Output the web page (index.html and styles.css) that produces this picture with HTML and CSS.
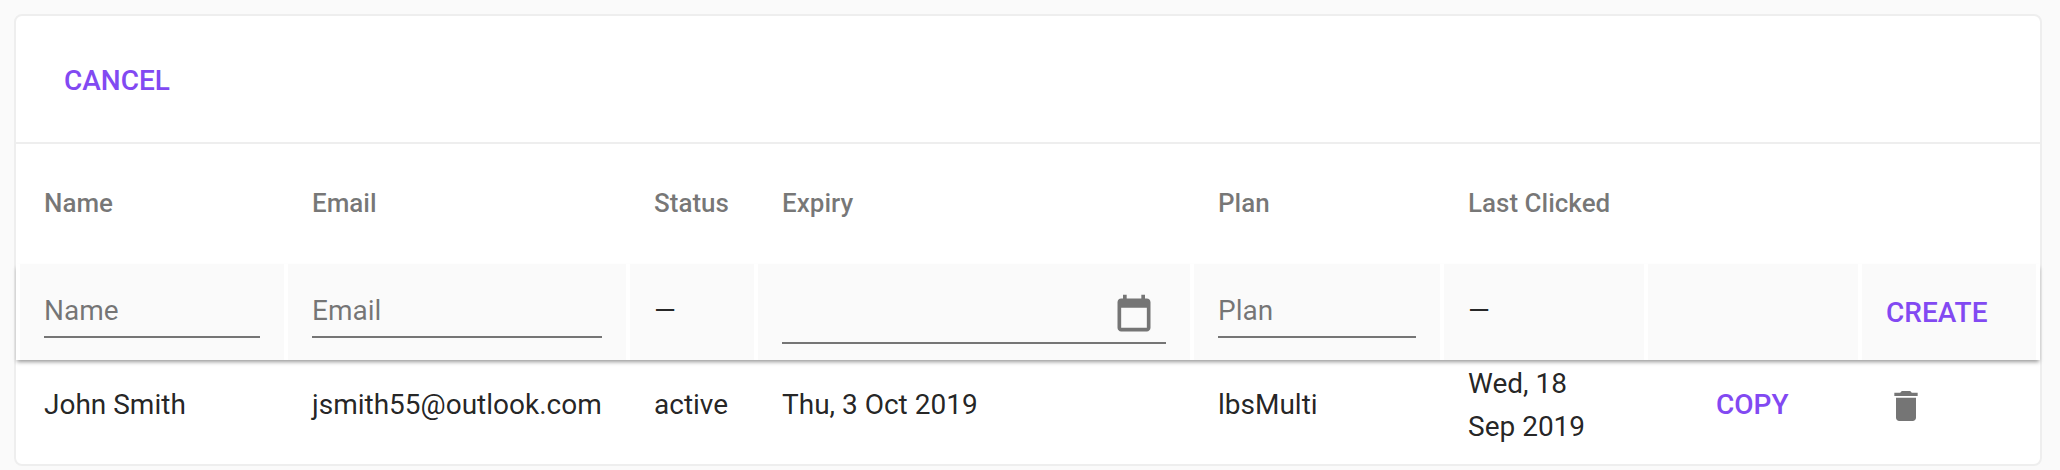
FILE: index.html
```html
<!DOCTYPE html>
<html lang="en">
<head>
  <meta charset="UTF-8">
  <title>Links</title>
  <link rel="stylesheet" href="styles.css">
</head>
<body>

  <div class="card">
    <div class="toolbar">
      <button class="text-btn">CANCEL</button>
    </div>

    <div class="row head-row">
      <div class="cell">Name</div>
      <div class="cell">Email</div>
      <div class="cell">Status</div>
      <div class="cell">Expiry</div>
      <div class="cell">Plan</div>
      <div class="cell">Last Clicked</div>
      <div class="cell"></div>
      <div class="cell"></div>
    </div>

    <div class="row filter-row">
      <div class="cell"><input class="field" type="text" placeholder="Name"></div>
      <div class="cell"><input class="field" type="text" placeholder="Email"></div>
      <div class="cell dash">&mdash;</div>
      <div class="cell">
        <div class="date-field">
          <svg class="calendar" viewBox="0 0 24 24"><path d="M19 3h-1V1h-2v2H8V1H6v2H5c-1.11 0-1.99.9-1.99 2L3 19c0 1.1.89 2 2 2h14c1.1 0 2-.9 2-2V5c0-1.1-.9-2-2-2zm0 16H5V8h14v11z"/></svg>
        </div>
      </div>
      <div class="cell"><input class="field" type="text" placeholder="Plan"></div>
      <div class="cell dash">&mdash;</div>
      <div class="cell"></div>
      <div class="cell"><button class="text-btn">CREATE</button></div>
    </div>

    <div class="row body-row">
      <div class="cell">John Smith</div>
      <div class="cell">jsmith55@outlook.com</div>
      <div class="cell">active</div>
      <div class="cell">Thu, 3 Oct 2019</div>
      <div class="cell">lbsMulti</div>
      <div class="cell date-cell">Wed, 18 Sep 2019</div>
      <div class="cell copy-cell"><button class="text-btn">COPY</button></div>
      <div class="cell">
        <svg class="trash" viewBox="0 0 24 24"><path d="M6 19c0 1.1.9 2 2 2h8c1.1 0 2-.9 2-2V7H6v12zM19 4h-3.5l-1-1h-5l-1 1H5v2h14V4z"/></svg>
      </div>
    </div>
  </div>

</body>
</html>
```

FILE: styles.css
```css
* {
  box-sizing: border-box;
}
body {
  margin: 0;
  padding: 14px 18px 0 14px;
  background-color: #fafafa;
  font-family: Roboto, sans-serif;
  font-size: 28px;
  color: rgba(0, 0, 0, 0.87);
}
.card {
  height: 452px;
  background: #fff;
  border: 2px solid #eee;
  border-radius: 8px;
}
.toolbar {
  display: flex;
  align-items: center;
  height: 128px;
  padding: 3px 0 0 48px;
  border-bottom: 2px solid #eee;
}
.text-btn {
  padding: 0;
  border: none;
  background: none;
  font-family: inherit;
  font-size: 28px;
  font-weight: 500;
  color: #8249f2;
  cursor: pointer;
}
.row {
  display: grid;
  grid-template-columns: 264px 338px 124px 432px 246px 200px 210px 174px;
  column-gap: 4px;
  padding: 0 4px;
}
.cell {
  display: flex;
  align-items: center;
  padding: 0 24px;
}
.head-row {
  height: 120px;
  padding-bottom: 2px;
  font-size: 26px;
  font-weight: 500;
  color: rgba(0, 0, 0, 0.54);
}
.filter-row {
  position: relative;
  height: 96px;
  background: #fff;
  box-shadow: 0 3px 4px -1px rgba(0, 0, 0, 0.4);
}
.filter-row .cell {
  background: #fafafa;
}
.field {
  width: 100%;
  height: 46px;
  margin-top: 6px;
  padding: 0 0 8px;
  border: none;
  border-bottom: 2px solid #757575;
  background: none;
  outline: none;
  font-family: inherit;
  font-size: 28px;
  color: inherit;
}
.field::placeholder {
  color: rgba(0, 0, 0, 0.54);
  opacity: 1;
}
.dash {
  padding-bottom: 4px;
}
.date-field {
  display: flex;
  justify-content: flex-end;
  width: 100%;
  height: 53px;
  margin-top: 10px;
  padding: 2px 10px 0 0;
  border-bottom: 2px solid #757575;
}
.calendar {
  width: 44px;
  height: 44px;
  fill: #757575;
}
.body-row {
  height: 88px;
  line-height: 43px;
}
.date-cell {
  padding-top: 2px;
}
.copy-cell {
  padding-left: 68px;
}
.trash {
  width: 40px;
  height: 40px;
  margin-top: 4px;
  fill: #757575;
}
```
